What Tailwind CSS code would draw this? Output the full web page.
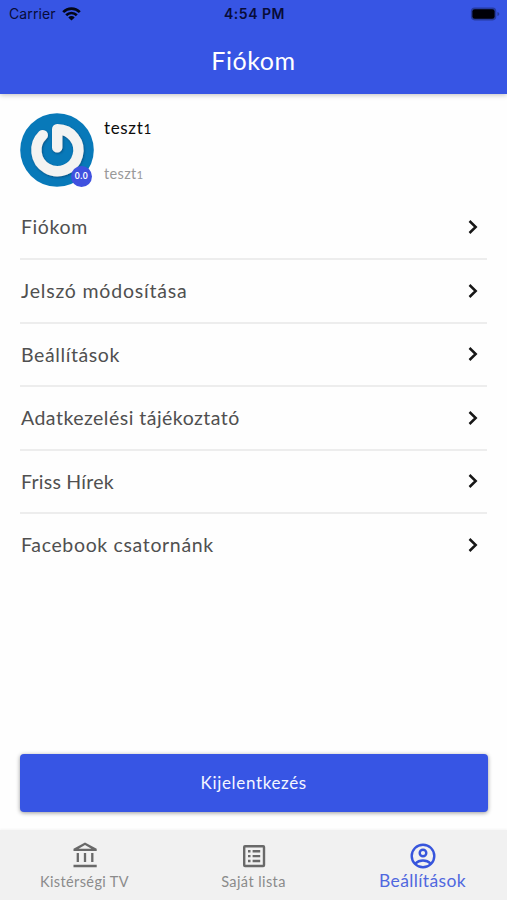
<!DOCTYPE html>
<html lang="hu">
<head>
<meta charset="utf-8">
<meta name="viewport" content="width=device-width, initial-scale=1">
<title>Fiókom</title>
<script src="https://cdn.jsdelivr.net/npm/@tailwindcss/browser@4"></script>
</head>
<body class="bg-white">
<div class="relative flex h-[900px] w-[507px] flex-col overflow-hidden bg-[#fefefe] font-['Lato',sans-serif]">
  <header class="h-[94px] shrink-0 bg-[#3755e4] shadow-[0_1px_5px_rgba(0,0,0,0.25)]">
    <div class="grid h-7 grid-cols-3 items-center pl-[9px] pr-[7px] font-['Inter',sans-serif] text-[#080c38]">
      <div class="flex items-center gap-[6px]">
        <span class="text-[14px] leading-7 tracking-[0.1px]">Carrier</span>
        <svg class="h-[14px] w-[19px]" viewBox="0 0 19 14" fill="none" stroke="#030617" stroke-width="2.7"><path d="M1.2 5.1a11.8 11.8 0 0 1 16.6 0M4.2 8.2a7.5 7.5 0 0 1 10.6 0"/><path d="M9.5 13.6 6.3 10.4a4.5 4.5 0 0 1 6.4 0z" fill="#030617" stroke="none"/></svg>
      </div>
      <span class="whitespace-nowrap text-center text-[14px] font-semibold leading-7 tracking-[0.5px]">4:54 PM</span>
      <svg class="h-[14px] w-[30px] justify-self-end" viewBox="0 0 30 14"><rect x=".9" y=".6" width="25.4" height="12.8" rx="3.8" fill="#263b9f"/><rect x="2.4" y="2.2" width="22.2" height="9.6" rx="2.4" fill="#000007"/><path d="M27.4 5v4q2-.5 2-2t-2-2z" fill="#263b9f"/></svg>
    </div>
    <h1 class="pt-[15px] text-center text-[25px] leading-[34px] tracking-[0.55px] text-white">Fiókom</h1>
  </header>

  <main class="flex flex-1 flex-col px-5">
    <section class="flex h-[102px] shrink-0 gap-[10px] pt-[19px]">
      <div class="relative h-[74px] w-[74px] shrink-0">
        <svg class="h-[74px] w-[74px]" viewBox="0 0 74 74" fill="none" stroke-linecap="round">
          <defs><filter id="soft" x="-20%" y="-20%" width="140%" height="140%"><feDropShadow dx="0.7" dy="1" stdDeviation="1" flood-color="#043a63" flood-opacity=".65"/></filter></defs>
          <circle cx="37" cy="37" r="36.8" fill="#0879b9"/>
          <g filter="url(#soft)" stroke="#f3f3f2" stroke-width="10.4"><path d="M22.8 22.1A21 21 0 1 0 37.2 16.2V34.4" stroke-linejoin="round"/></g>
        </svg>
        <span class="absolute bottom-0 right-[2px] flex h-[21px] w-[21px] items-center justify-center rounded-full bg-[#3f51df] text-[8.5px] font-bold tracking-[0.5px] text-white">0.0</span>
      </div>
      <div class="flex flex-col pt-[4px]">
        <span class="text-[17px] leading-[22px] tracking-[0.65px] text-[#0c0c0c]">teszt<span class="text-[13.5px]">1</span></span>
        <span class="mt-[24px] text-[14.5px] leading-[20px] tracking-[0.35px] text-[#999]">teszt<span class="text-[11.5px]">1</span></span>
      </div>
    </section>
    <nav class="text-[19.5px] text-[#505050]">
      <a class="flex h-[64px] items-center justify-between border-b-2 border-[#ededed] pl-px pr-[8px]"><span class="tracking-[0.6px]">Fiókom</span><svg class="h-[14px] w-[11px]" viewBox="0 0 11 14" fill="none" stroke="#171717" stroke-width="2.5"><path d="m1.5 1 6.2 6-6.2 6"/></svg></a>
      <a class="flex h-[63.5px] items-center justify-between border-b-2 border-[#ededed] pl-px pr-[8px]"><span class="tracking-[0.8px]">Jelszó módosítása</span><svg class="h-[14px] w-[11px]" viewBox="0 0 11 14" fill="none" stroke="#171717" stroke-width="2.5"><path d="m1.5 1 6.2 6-6.2 6"/></svg></a>
      <a class="flex h-[63.5px] items-center justify-between border-b-2 border-[#ededed] pl-px pr-[8px]"><span class="tracking-[0.6px]">Beállítások</span><svg class="h-[14px] w-[11px]" viewBox="0 0 11 14" fill="none" stroke="#171717" stroke-width="2.5"><path d="m1.5 1 6.2 6-6.2 6"/></svg></a>
      <a class="flex h-[63.5px] items-center justify-between border-b-2 border-[#ededed] pl-px pr-[8px]"><span class="tracking-[0.48px]">Adatkezelési tájékoztató</span><svg class="h-[14px] w-[11px]" viewBox="0 0 11 14" fill="none" stroke="#171717" stroke-width="2.5"><path d="m1.5 1 6.2 6-6.2 6"/></svg></a>
      <a class="flex h-[63.5px] items-center justify-between border-b-2 border-[#ededed] pl-px pr-[8px]"><span class="tracking-[0.25px]">Friss Hírek</span><svg class="h-[14px] w-[11px]" viewBox="0 0 11 14" fill="none" stroke="#171717" stroke-width="2.5"><path d="m1.5 1 6.2 6-6.2 6"/></svg></a>
      <a class="flex h-[62px] items-center justify-between pl-px pr-[8px]"><span class="tracking-[0.65px]">Facebook csatornánk</span><svg class="h-[14px] w-[11px]" viewBox="0 0 11 14" fill="none" stroke="#171717" stroke-width="2.5"><path d="m1.5 1 6.2 6-6.2 6"/></svg></a>
    </nav>
    <button class="mb-[18px] mt-auto h-[58px] w-[467.5px] rounded-[4px] bg-[#3755e4] text-[17px] tracking-[0.65px] text-[#f4f6ff] shadow-[0_1px_4px_rgba(0,0,0,0.4)]">Kijelentkezés</button>
  </main>

  <footer class="grid h-[70px] shrink-0 grid-cols-3 bg-[#f1f1f1] text-[14.5px] text-[#8b8b8b] shadow-[0_-1px_2px_rgba(0,0,0,0.04)]">
    <a class="flex flex-col items-center pt-[12px]">
      <svg class="h-[26px] w-[24px]" viewBox="0 0 24 26" fill="none" stroke="#696969" stroke-width="2.3"><path d="M.5 24h23.2M4.8 11v9M12 11v9m7.3-9v9"/><path d="M12 .5.5 6.7v2.2h23.2V6.7zm0 2.6 6.4 3.6H5.6z" fill="#696969" fill-rule="evenodd" stroke="none"/></svg>
      <span class="mt-[4px] leading-[20px] tracking-[0.38px]">Kistérségi TV</span>
    </a>
    <a class="flex flex-col items-center pt-[14px]">
      <svg class="h-[24px] w-[24px]" viewBox="0 0 24 24" fill="none" stroke="#696969" stroke-width="2.4"><rect x="2.2" y="2.2" width="19.8" height="19.8" rx=".8"/><path d="M6 7.2h2.5M6 12.1h2.5M6 17h2.5M10.6 7.2h7.6m-7.6 4.9h7.6M10.6 17h7.6"/></svg>
      <span class="mt-[4px] leading-[20px] tracking-[0.42px]">Saját lista</span>
    </a>
    <a class="flex flex-col items-center pt-[13px] text-[#5068df]">
      <svg class="h-[26px] w-[26px]" viewBox="0 0 26 26" fill="none" stroke="#3755dc" stroke-width="2.4"><circle cx="13" cy="13" r="11.3"/><circle cx="13" cy="10" r="3.3"/><path d="M5.2 20.6c4.4-4.2 11.2-4.2 15.6 0"/></svg>
      <span class="mt-[1px] text-[17.5px] leading-[22px] tracking-[0.36px]">Beállítások</span>
    </a>
  </footer>
</div>
</body>
</html>
